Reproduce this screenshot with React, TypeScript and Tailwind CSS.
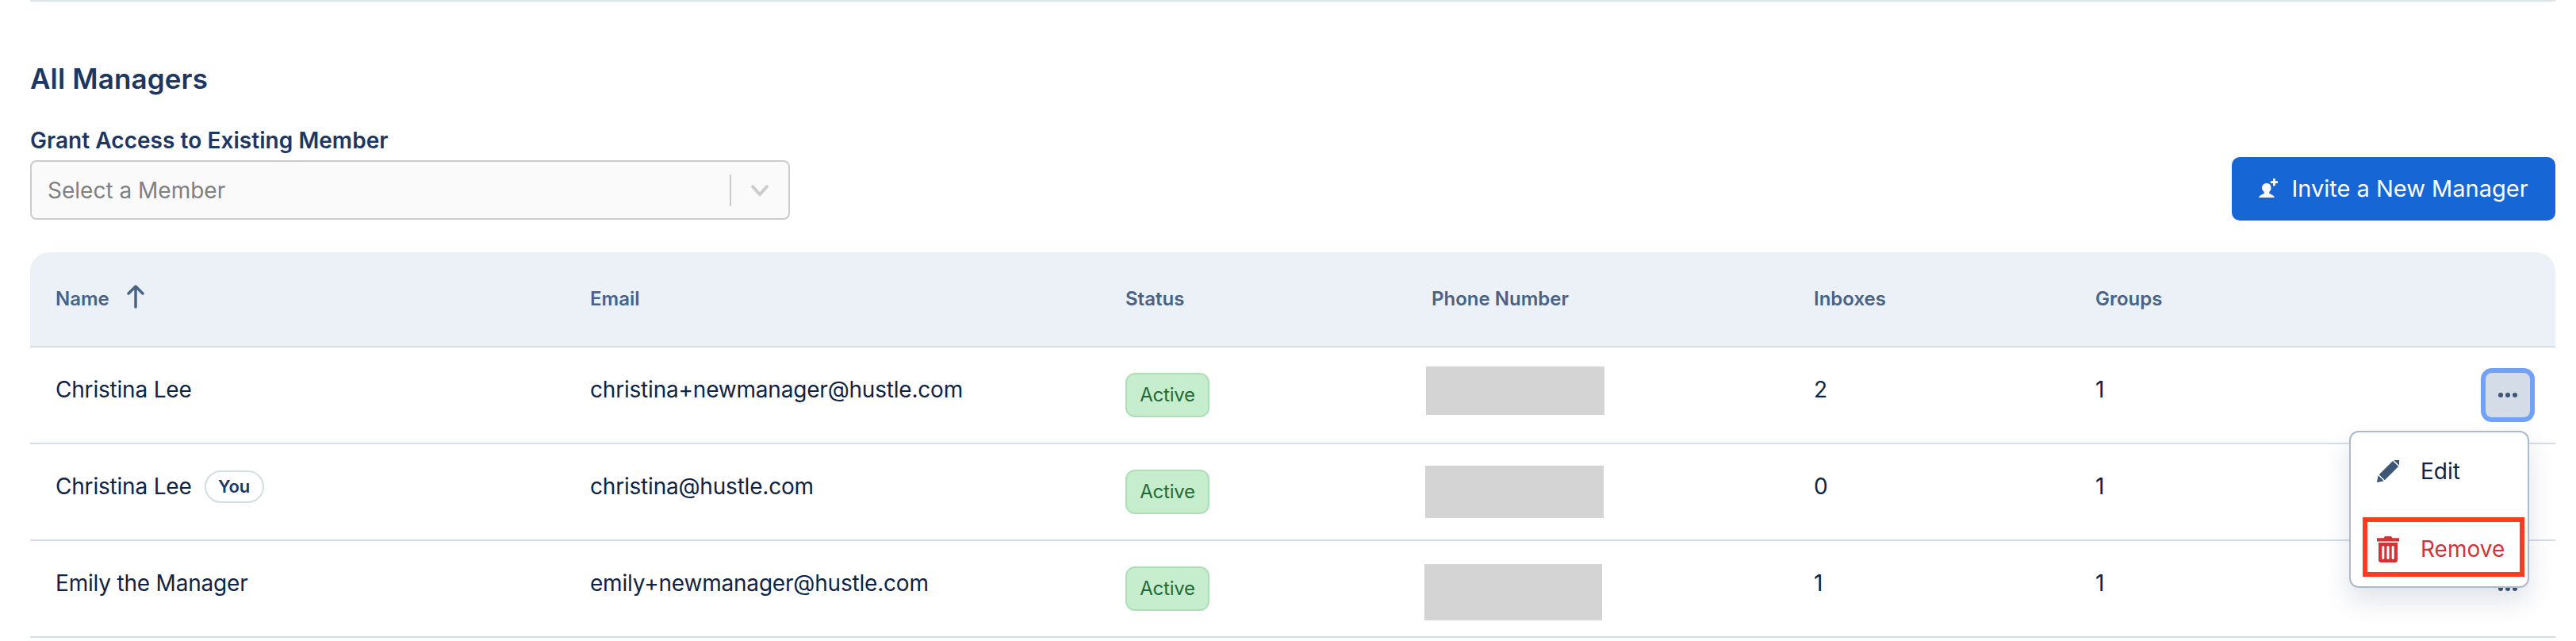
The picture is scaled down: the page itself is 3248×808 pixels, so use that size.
const rows = [
  { name: "Christina Lee", you: false, email: "christina+newmanager@hustle.com", inboxes: "2", groups: "1", phone: "w-[225px] h-[61px] -ml-[7px] -mt-[11px]" },
  { name: "Christina Lee", you: true, email: "christina@hustle.com", inboxes: "0", groups: "1", phone: "w-[225px] h-[66px] -ml-[8px]" },
  { name: "Emily the Manager", you: false, email: "emily+newmanager@hustle.com", inboxes: "1", groups: "1", phone: "w-[224px] h-[71px] -ml-[9px] mt-[9px]" },
];

const cols = "grid grid-cols-[706px_675px_386px_482px_355px_580px]";

function Dots() {
  return (
    <svg width="24" height="8" viewBox="0 0 24 8" fill="#3d5678">
      <circle cx="3" cy="4" r="3" />
      <circle cx="12" cy="4" r="3" />
      <circle cx="21" cy="4" r="3" />
    </svg>
  );
}

function PersonPlus() {
  return (
    <svg width="26" height="26" viewBox="0 0 26 26" fill="white" className="shrink-0">
      <path d="M10 6c3.500 0 5.500 2.700 5.500 5.800 0 2.300-.9 4.100-2.300 5.200v1.600c0 1 5.800 1.900 6.800 5.400H0c1-3.500 6.800-4.400 6.800-5.400V17c-1.400-1.100-2.800-2.900-2.800-5.200C4 8.700 6.500 6 10 6z" />
      <path d="M18 0h2.800v3.200H24V6h-3.200v3.200H18V6h-3.200V3.200H18z" />
    </svg>
  );
}

function Pencil() {
  return (
    <svg width="28" height="28" viewBox="-14 -14 28 28" fill="#3d5678" className="shrink-0">
      <g transform="rotate(45)">
        <path d="M-5 -15 V-16.500 C-5 -19 -3 -20.500 0 -20.500 C3 -20.500 5 -19 5 -16.500 V-15 Z" />
        <rect x="-5" y="-13.500" width="10" height="24.500" />
        <path d="M-5 12.500 H5 L0 20 Z" />
      </g>
    </svg>
  );
}

function Trash() {
  return (
    <svg width="28" height="33" viewBox="0 0 28 33" className="shrink-0">
      <path fill="#d13438" d="M10 0h8l1.500 2.200H28v4.300H0V2.200h8.500z" />
      <path fill="#d13438" d="M2 8h24v22c0 1.700-1.300 3-3 3H5c-1.700 0-3-1.300-3-3z" />
      <rect x="6.300" y="12" width="3" height="17" rx="1.500" fill="white" />
      <rect x="12.500" y="12" width="3" height="17" rx="1.500" fill="white" />
      <rect x="18.700" y="12" width="3" height="17" rx="1.500" fill="white" />
    </svg>
  );
}

export default function App() {
  return (
    <div className="w-[3248px] h-[808px] overflow-hidden bg-white font-['Inter',sans-serif] text-[28px] text-[#0f2444]">
      <div className="ml-[38px] w-[3184px] h-[2px] bg-[#dde3ec]" />
      <div className="ml-[38px] w-[3184px]">
        <h2 className="mt-[77px] h-[40px] leading-[40px] text-[35px] tracking-[0.15px] font-semibold text-[#1c3763]">All Managers</h2>
        <div className="mt-[41px] flex justify-between items-end">
          <div>
            <label className="block h-[34px] leading-[34px] text-[28px] tracking-[0.05px] font-semibold text-[#1c3763] mb-[8px]">Grant Access to Existing Member</label>
            <div className="w-[958px] h-[75px] border-2 border-[#cccccc] rounded-[8px] bg-[#fafafa] flex items-center pl-[20px]">
              <span className="flex-1 text-[#808080]">Select a Member</span>
              <span className="w-[2px] h-[40px] bg-[#cccccc]" />
              <svg width="24" height="16" viewBox="0 0 24 16" fill="none" stroke="#cccccc" strokeWidth="4" className="mx-[24px]">
                <path d="M2 2 L12 13 L22 2" />
              </svg>
            </div>
          </div>
          <button className="w-[408px] h-[80px] -mb-[1px] bg-[#1766d6] rounded-[10px] text-white text-[29px] flex items-center justify-center gap-[15px]">
            <PersonPlus />
            <span>Invite a New Manager</span>
          </button>
        </div>

        <div className="relative mt-[41px]">
          <div className={`${cols} h-[118px] bg-[#ecf1f8] rounded-t-[24px] border-b-2 border-[#d4dce8] box-content text-[24px] font-semibold text-[#4a6285]`}>
            <div className="pl-[32px] flex items-center gap-[20px]">
              <span>Name</span>
              <svg width="26" height="30" viewBox="0 0 26 30" fill="none" stroke="#4a6285" strokeWidth="3.500" strokeLinecap="round" strokeLinejoin="round" className="-mt-[6px]">
                <path d="M13 28 V2 M4 11 L13 2 L22 11" />
              </svg>
            </div>
            <div className="flex items-center">Email</div>
            <div className="flex items-center">Status</div>
            <div className="flex items-center">Phone Number</div>
            <div className="flex items-center">Inboxes</div>
            <div className="flex items-center">Groups</div>
          </div>
          {rows.map((r, i) => (
            <div key={i} className={`${cols} h-[122px] border-b-2 border-[#d4dce8] tracking-[-0.2px]`}>
              <div className="pl-[32px] pb-[14px] flex items-center gap-[16px]">
                <span>{r.name}</span>
                {r.you && (
                  <span className="h-[41px] w-[75px] border-2 border-[#d4dce8] rounded-full flex items-center justify-center text-[22px] font-semibold text-[#1c3763]">You</span>
                )}
              </div>
              <div className="pb-[14px] flex items-center">{r.email}</div>
              <div className="flex items-center">
                <span className="w-[106px] h-[56px] border-2 border-[#aee0b6] bg-[#c6edcd] rounded-[12px] flex items-center justify-center text-[24px] text-[#236b36]">Active</span>
              </div>
              <div className="flex items-center">
                <div className={`bg-[#d4d4d4] ${r.phone}`} />
              </div>
              <div className="pb-[14px] flex items-center">{r.inboxes}</div>
              <div className="flex items-center justify-between">
                <span className="pb-[14px]">{r.groups}</span>
                <span className={`mr-[26px] w-[68px] h-[68px] rounded-[14px] flex items-center justify-center ${i === 0 ? "border-[6px] border-[#72a1f8] bg-[#d4dce8]" : ""}`}>
                  <Dots />
                </span>
              </div>
            </div>
          ))}

          <div className="absolute left-[2924px] top-[225px] w-[227px] h-[198px] bg-white border-2 border-[#adbacd] rounded-[12px] shadow-[0_16px_32px_rgba(30,50,90,0.14)]">
            <div className="h-[98px] pl-[33px] flex items-center gap-[27px]">
              <Pencil />
              <span>Edit</span>
            </div>
            <div className="h-[98px] pl-[33px] flex items-center gap-[27px] text-[#d13438]">
              <Trash />
              <span>Remove</span>
            </div>
            <div className="absolute left-[15px] top-[107px] w-[204px] h-[75px] border-[6px] border-[#ff3b1f]" />
          </div>
        </div>
      </div>
    </div>
  );
}
